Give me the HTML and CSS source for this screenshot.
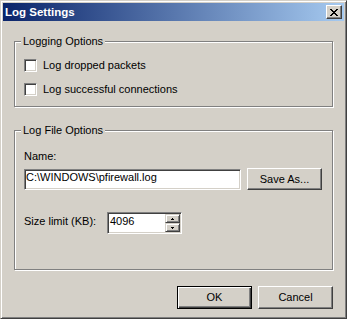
FILE: index.html
```html
<!DOCTYPE html>
<html lang="en">
<head>
  <meta charset="utf-8" />
  <title>Log Settings</title>
  <link rel="stylesheet" href="styles.css">
</head>
<body>
  <div class="window">
    <div class="titlebar">
      <span class="title">Log Settings</span>
      <div class="caption-btn">
        <svg width="8" height="7" viewBox="0 0 8 7" shape-rendering="crispEdges"><path d="M0 0h2v1H0zM6 0h2v1H6zM1 1h2v1H1zM5 1h2v1H5zM2 2h2v1H2zM4 2h2v1H4zM3 3h2v1H3zM2 4h2v1H2zM4 4h2v1H4zM1 5h2v1H1zM5 5h2v1H5zM0 6h2v1H0zM6 6h2v1H6z" fill="#000"/></svg>
      </div>
    </div>
    <div class="dialog">
      <div class="group group-logging">
        <span class="group-label">Logging Options</span>
        <div class="check"><span class="checkbox"></span>Log dropped packets</div>
        <div class="check"><span class="checkbox"></span>Log successful connections</div>
      </div>
      <div class="group group-file">
        <span class="group-label">Log File Options</span>
        <div class="field-label">Name:</div>
        <div class="name-row">
          <div class="edit edit-path">C:\WINDOWS\pfirewall.log</div>
          <div class="button button-small">Save As...</div>
        </div>
        <div class="size-row">
          <span class="size-label">Size limit (KB):</span>
          <div class="edit edit-size">
            <span class="size-value">4096</span>
            <div class="spin">
              <div class="spin-btn"><svg width="3" height="2" viewBox="0 0 3 2" shape-rendering="crispEdges"><path d="M1 0h1v1h1v1H0V1h1z" fill="#000"/></svg></div>
              <div class="spin-btn"><svg width="3" height="2" viewBox="0 0 3 2" shape-rendering="crispEdges"><path d="M0 0h3v1H2v1H1V1H0z" fill="#000"/></svg></div>
            </div>
          </div>
        </div>
      </div>
      <div class="actions">
        <div class="button default">OK</div>
        <div class="button">Cancel</div>
      </div>
    </div>
  </div>
</body>
</html>
```

FILE: styles.css
```css
body { margin: 0; font-family: "Liberation Sans", Arial, sans-serif; font-size: 11px; line-height: 13px; color: #000; }
.window { width: 347px; height: 319px; box-sizing: border-box; background: #d4d0c8; border: 1px solid; border-color: #d4d0c8 #404040 #404040 #d4d0c8; box-shadow: inset 1px 1px #fff, inset -1px -1px #808080; padding: 2px; display: flex; flex-direction: column; }

/* caption */
.titlebar { height: 18px; flex: none; background: linear-gradient(to right, #0a246a, #a6caf0); display: flex; justify-content: space-between; align-items: flex-start; }
.title { color: #fff; font-weight: bold; font-size: 11.5px; line-height: 18px; padding-left: 2px; }
.caption-btn { width: 16px; height: 14px; box-sizing: border-box; margin: 2px 2px 0 0; background: #d4d0c8; border: 1px solid; border-color: #fff #404040 #404040 #fff; box-shadow: inset -1px -1px #808080; display: flex; justify-content: center; align-items: center; }

/* body */
.dialog { flex: 1; padding: 20px 0 0 11px; }
.group { position: relative; width: 319px; box-sizing: border-box; border: 1px solid #808080; box-shadow: 1px 1px #fff, inset 1px 1px #fff; }
.group-label { position: absolute; top: -7px; left: 6px; padding: 0 2px; background: #d4d0c8; }
.group-logging { height: 66px; padding: 17px 0 0 9px; display: flex; flex-direction: column; gap: 11px; }
.group-file { height: 140px; margin-top: 23px; padding: 19px 0 0 9px; }

.check { display: flex; align-items: center; gap: 6px; height: 13px; }
.checkbox { width: 13px; height: 13px; box-sizing: border-box; background: #fff; border: 1px solid; border-color: #808080 #fff #fff #808080; box-shadow: inset 1px 1px #404040, inset -1px -1px #d4d0c8; }

.edit { box-sizing: border-box; background: #fff; border: 1px solid; border-color: #808080 #fff #fff #808080; box-shadow: inset 1px 1px #404040, inset -1px -1px #d4d0c8; }
.name-row { display: flex; align-items: flex-start; gap: 6px; margin-top: 5px; }
.edit-path { width: 217px; height: 21px; margin-top: 1px; padding: 1px 0 0 1px; white-space: nowrap; }
.size-row { display: flex; align-items: flex-start; margin-top: 22px; }
.size-label { width: 83px; margin-top: 3px; }
.edit-size { width: 75px; height: 22px; padding: 1px; display: flex; }
.size-value { flex: 1; padding: 1px 0 0 1px; }
.spin { width: 15px; display: flex; flex-direction: column; }
.spin-btn { height: 9px; box-sizing: border-box; background: #d4d0c8; border: 1px solid; border-color: #d4d0c8 #404040 #404040 #d4d0c8; box-shadow: inset 1px 1px #fff, inset -1px -1px #808080; display: flex; justify-content: center; align-items: center; }

.button { width: 75px; height: 23px; box-sizing: border-box; background: #d4d0c8; border: 1px solid; border-color: #fff #404040 #404040 #fff; box-shadow: inset -1px -1px #808080; display: flex; justify-content: center; align-items: center; }
.button-small { height: 22px; }
.button.default { border-color: #000; box-shadow: inset 1px 1px #fff, inset -1px -1px #404040, inset -2px -2px #808080; }
.actions { width: 319px; display: flex; justify-content: flex-end; gap: 6px; margin-top: 16px; }
```
